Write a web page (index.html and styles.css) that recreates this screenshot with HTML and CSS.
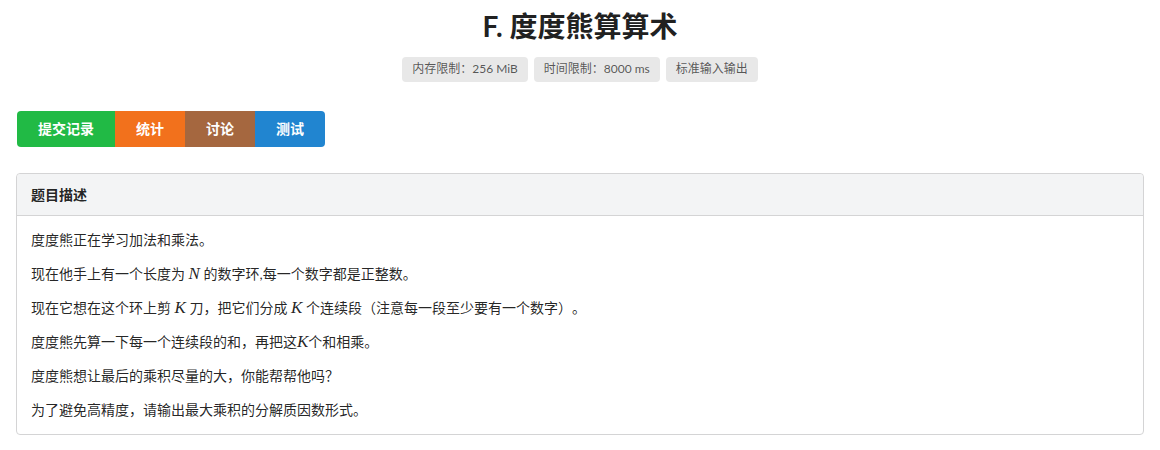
FILE: index.html
```html
<!DOCTYPE html>
<html lang="zh-CN">
<head>
    <meta charset="UTF-8">
    <meta name="viewport" content="width=device-width, initial-scale=1.0">
    <title>F. 度度熊算算术</title>
    <link rel="stylesheet" href="styles.css">
</head>
<body>
    <div class="main">
        <h1 class="title">F. 度度熊算算术</h1>

        <div class="labels">
            <span class="label">内存限制：256 MiB</span>
            <span class="label">时间限制：8000 ms</span>
            <span class="label">标准输入输出</span>
        </div>

        <div class="buttons">
            <a class="btn green">提交记录</a>
            <a class="btn orange">统计</a>
            <a class="btn brown">讨论</a>
            <a class="btn blue">测试</a>
        </div>

        <div class="card">
            <div class="card-header">题目描述</div>
            <div class="card-body">
                <p>度度熊正在学习加法和乘法。</p>
                <p>现在他手上有一个长度为 <span class="math">N</span> 的数字环,每一个数字都是正整数。</p>
                <p>现在它想在这个环上剪 <span class="math">K</span> 刀，把它们分成 <span class="math">K</span> 个连续段（注意每一段至少要有一个数字）。</p>
                <p>度度熊先算一下每一个连续段的和，再把这<span class="math">K</span>个和相乘。</p>
                <p>度度熊想让最后的乘积尽量的大，你能帮帮他吗？</p>
                <p>为了避免高精度，请输出最大乘积的分解质因数形式。</p>
            </div>
        </div>
    </div>
</body>
</html>
```

FILE: styles.css
```css
body { margin: 0; background: #fff; color: rgba(0,0,0,.87); font-family: Lato, "Noto Sans CJK SC", sans-serif; font-size: 14px; }
.main { padding: 8px 16px 0; }

.title { margin: 0; font-size: 28px; line-height: 36px; font-weight: 700; text-align: center; color: #212121; }

.labels { display: flex; justify-content: center; gap: 6px; margin-top: 13px; }
.label { background: #e8e8e8; color: rgba(0,0,0,.65); font-size: 12px; font-weight: 400; line-height: 1; padding: 6px 10px 7px; border-radius: 4px; }

.buttons { display: inline-flex; margin: 29px 0 0 1px; border-radius: 4px; overflow: hidden; }
.btn { color: #fff; font-weight: 700; font-size: 14px; line-height: 36px; padding: 0 21px; cursor: pointer; }
.btn.green { background: #21ba45; }
.btn.orange { background: #f2711c; }
.btn.brown { background: #a5673f; }
.btn.blue { background: #2185d0; }

.card { margin-top: 26px; border: 1px solid #d4d4d5; border-radius: 4px; }
.card-header { background: #f3f4f5; border-bottom: 1px solid #d4d4d5; padding: 11px 14px; line-height: 19px; font-weight: 700; border-radius: 4px 4px 0 0; }
.card-body { padding: 14px; font-size: 14px; text-spacing-trim: space-all; }
.card-body p { margin: 0 0 14px; line-height: 20px; }
.card-body p:last-child { margin-bottom: 0; }
.math { font-family: "Liberation Serif", serif; font-style: italic; font-size: 1.21em; line-height: 1; }
```
